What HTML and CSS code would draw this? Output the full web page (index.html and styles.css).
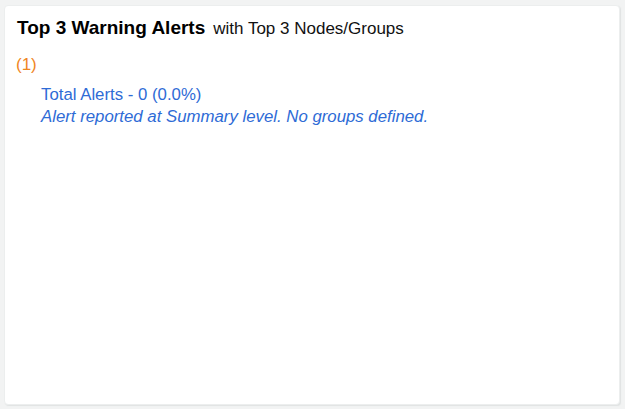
FILE: index.html
```html
<!DOCTYPE html>
<html>
<head>
<meta charset="utf-8">
<link rel="stylesheet" href="styles.css">
</head>
<body>
<div class="card">
  <div class="header">
    <span class="title">Top 3 Warning Alerts</span>
    <span class="subtitle">with Top 3 Nodes/Groups</span>
  </div>
  <div class="rank">(1)</div>
  <div class="details">
    <div class="total">Total Alerts - 0 (0.0%)</div>
    <div class="note">Alert reported at Summary level. No groups defined.</div>
  </div>
</div>
</body>
</html>
```
FILE: styles.css
```css
html, body {
  margin: 0;
  padding: 0;
  background: #f2f3f3;
  font-family: "Liberation Sans", Arial, sans-serif;
}
body {
  padding: 5px 5px 4px 4px;
  height: 409px;
  box-sizing: border-box;
}
.card {
  background: #fff;
  height: 100%;
  box-sizing: border-box;
  border-radius: 4px;
  border: 1px solid #eceeee;
  box-shadow: 1px 1px 1px #e0e3e3;
  padding: 11px 12px;
}
.header {
  display: flex;
  align-items: baseline;
  gap: 8px;
  line-height: 22px;
}
.title {
  font-size: 19px;
  font-weight: bold;
  color: #000;
}
.subtitle {
  font-size: 17px;
  color: #111;
}
.rank {
  margin-top: 15px;
  color: #f0861e;
  font-size: 17px;
  line-height: 20px;
  margin-left: -1px;
}
.details {
  margin-top: 9px;
  padding-left: 24px;
  color: #2e6bd6;
  font-size: 16.8px;
  line-height: 22px;
}
.note {
  font-style: italic;
}
```
